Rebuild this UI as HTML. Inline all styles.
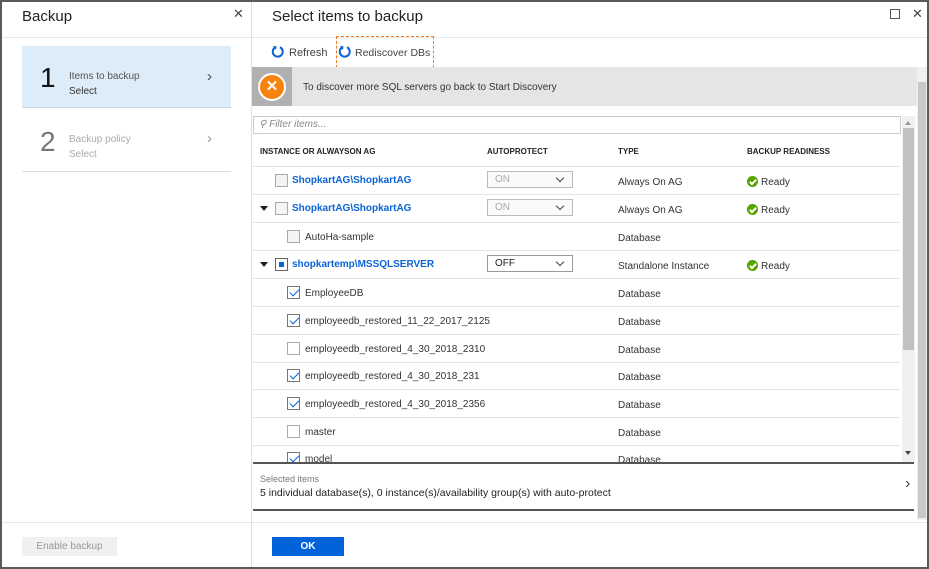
<!DOCTYPE html><html><head><style>
*{box-sizing:border-box;margin:0;padding:0}
body{width:929px;height:569px;position:relative;background:#fff;font-family:"Liberation Sans",sans-serif;font-size:11px;color:#333;overflow:hidden}
.a{position:absolute}
.cb{position:absolute;width:13px;height:13px;border:1px solid #aaa;background:#f4f4f4}
.ck{background:#fff;border-color:#777}
.ck::after{content:"";position:absolute;left:4px;top:0px;width:4px;height:8px;border:solid #0063d9;border-width:0 1.5px 1.5px 0;transform:rotate(45deg)}
.ln{position:absolute;left:253px;width:647px;height:1px;background:#e4e4e4}
.sel{position:absolute;left:487px;width:86px;height:17px;border:1px solid #999;padding:2px 7px;font-size:10px}
.sel.dis{color:#aaa;border-color:#bbb;background:#fafafa}
.sel::after{content:"";position:absolute;right:9px;top:3px;width:5px;height:5px;border:solid #444;border-width:0 1px 1px 0;transform:rotate(45deg)}
.ok{position:absolute;width:11px;height:11px;border-radius:50%;background:#57a300}
.ok::after{content:"";position:absolute;left:4px;top:2px;width:2px;height:5px;border:solid #fff;border-width:0 2px 2px 0;transform:rotate(45deg)}
.bl{color:#0a64d6;font-weight:bold}
.tri{position:absolute;width:0;height:0;border-left:4px solid transparent;border-right:4px solid transparent;border-top:5px solid #222}
.t{position:absolute;font-size:10px;top:0}
</style></head><body>
<div class="a" style="left:0;top:0;width:929px;height:569px;border:2px solid #5a5a5a;z-index:9;pointer-events:none"></div>
<!-- left pane -->
<div class="a" style="left:22px;top:8px;font-size:15px;color:#222">Backup</div>
<div class="a" style="left:233px;top:6px;font-size:13px;color:#444">✕</div>
<div class="a" style="left:2px;top:37px;width:249px;height:1px;background:#e6e6e6"></div>
<div class="a" style="left:251px;top:2px;width:1px;height:565px;background:#e0e0e0"></div>
<div class="a" style="left:22px;top:46px;width:209px;height:62px;background:#dcecf9;border-bottom:1px solid #c8d8e6"></div>
<div class="a" style="left:40px;top:62px;font-size:28px;color:#111">1</div>
<div class="a" style="left:69px;top:69px;color:#555;font-size:10px;line-height:15px">Items to backup<br><span style="color:#333">Select</span></div>
<div class="a" style="left:207px;top:68px;font-size:15px;color:#444">›</div>
<div class="a" style="left:40px;top:126px;font-size:28px;color:#777">2</div>
<div class="a" style="left:69px;top:132px;color:#aaa;font-size:10px;line-height:15px">Backup policy<br>Select</div>
<div class="a" style="left:207px;top:130px;font-size:15px;color:#999">›</div>
<div class="a" style="left:22px;top:171px;width:209px;height:1px;background:#ddd"></div>
<div class="a" style="left:2px;top:522px;width:249px;height:1px;background:#e6e6e6"></div>
<div class="a" style="left:22px;top:537px;width:95px;height:19px;background:#f0f0f0;color:#999;font-size:10px;text-align:center;line-height:19px">Enable backup</div>
<!-- right pane -->
<div class="a" style="left:272px;top:8px;font-size:15px;color:#222">Select items to backup</div>
<div class="a" style="left:890px;top:9px;width:10px;height:10px;border:1px solid #555"></div>
<div class="a" style="left:912px;top:6px;font-size:13px;color:#444">✕</div>
<div class="a" style="left:252px;top:37px;width:675px;height:1px;background:#e8e8e8"></div>
<svg class="a" style="left:271px;top:45px" width="13" height="13" viewBox="0 0 13 13"><path d="M4 2.5A5 5 0 1 0 9 2.2" fill="none" stroke="#0a64d6" stroke-width="2"/><path d="M2 1L5.5 1.3L5 5Z" fill="#0a64d6"/></svg>
<div class="a" style="left:289px;top:47px;color:#444">Refresh</div>
<div class="a" style="left:336px;top:36px;width:98px;height:32px;border:1.5px dashed #f07a22"></div>
<svg class="a" style="left:338px;top:45px" width="13" height="13" viewBox="0 0 13 13"><path d="M4 2.5A5 5 0 1 0 9 2.2" fill="none" stroke="#0a64d6" stroke-width="2"/><path d="M2 1L5.5 1.3L5 5Z" fill="#0a64d6"/></svg>
<div class="a" style="left:355px;top:47px;color:#444;font-size:10.5px">Rediscover DBs</div>
<div class="a" style="left:252px;top:67px;width:665px;height:39px;background:#e5e5e5"></div>
<div class="a" style="left:252px;top:67px;width:40px;height:39px;background:#b0b0b0"></div>
<div class="a" style="left:258px;top:73px;width:28px;height:28px;border-radius:50%;background:#f7830f;border:2px solid #fff;color:#fff;font-size:15px;text-align:center;line-height:23px;font-weight:bold">✕</div>
<div class="a" style="left:303px;top:82px;font-size:10px;color:#333">To discover more SQL servers go back to Start Discovery</div>
<div class="a" style="left:917px;top:67px;width:10px;height:453px;background:#f0f0f0"></div>
<div class="a" style="left:918px;top:82px;width:8px;height:436px;background:#c8c8c8"></div>
<div class="a" style="left:253px;top:116px;width:648px;height:18px;border:1px solid #ccc"></div>
<div class="a" style="left:259px;top:119px;font-size:10px;color:#888;font-style:italic">⚲ Filter items...</div>
<div class="a" style="left:902px;top:116px;width:13px;height:346px;background:#f0f0f0"></div>
<div class="a" style="left:903px;top:128px;width:11px;height:222px;background:#c1c1c1"></div>
<div class="a" style="left:905px;top:121px;border-left:3px solid transparent;border-right:3px solid transparent;border-bottom:4px solid #999;width:0"></div>
<div class="a" style="left:905px;top:451px;border-left:3px solid transparent;border-right:3px solid transparent;border-top:4px solid #444;width:0"></div>
<div class="a" style="left:260px;top:147px;font-size:8px;font-weight:bold;color:#222">INSTANCE OR ALWAYSON AG</div>
<div class="a" style="left:487px;top:147px;font-size:8px;font-weight:bold;color:#222">AUTOPROTECT</div>
<div class="a" style="left:618px;top:147px;font-size:8px;font-weight:bold;color:#222">TYPE</div>
<div class="a" style="left:747px;top:147px;font-size:8px;font-weight:bold;color:#222">BACKUP READINESS</div>
<div class="ln" style="top:166px"></div><div class="ln" style="top:194px"></div><div class="ln" style="top:222px"></div><div class="ln" style="top:250px"></div><div class="ln" style="top:278px"></div><div class="ln" style="top:306px"></div><div class="ln" style="top:334px"></div><div class="ln" style="top:362px"></div><div class="ln" style="top:389px"></div><div class="ln" style="top:417px"></div><div class="ln" style="top:445px"></div>
<!-- row1 -->
<div class="cb" style="left:275px;top:174px"></div><div class="a bl" style="left:292px;top:175px;font-size:10px">ShopkartAG\ShopkartAG</div>
<div class="sel dis" style="top:171px">ON</div><div class="a" style="left:618px;top:177px;font-size:10px">Always On AG</div>
<div class="ok" style="left:747px;top:176px"></div><div class="a" style="left:761px;top:177px;font-size:10px">Ready</div>
<!-- row2 -->
<div class="tri" style="left:260px;top:206px"></div>
<div class="cb" style="left:275px;top:202px"></div><div class="a bl" style="left:292px;top:203px;font-size:10px">ShopkartAG\ShopkartAG</div>
<div class="sel dis" style="top:199px">ON</div><div class="a" style="left:618px;top:205px;font-size:10px">Always On AG</div>
<div class="ok" style="left:747px;top:204px"></div><div class="a" style="left:761px;top:205px;font-size:10px">Ready</div>
<!-- row3 -->
<div class="cb" style="left:287px;top:230px"></div><div class="a" style="left:305px;top:232px;font-size:10px">AutoHa-sample</div>
<div class="a" style="left:618px;top:233px;font-size:10px">Database</div>
<!-- row4 -->
<div class="tri" style="left:260px;top:262px"></div>
<div class="cb" style="left:275px;top:258px;background:#fff;border-color:#666"><div style="position:absolute;left:3px;top:3px;width:5px;height:5px;background:#0a64d6"></div></div>
<div class="a bl" style="left:292px;top:259px;font-size:10px">shopkartemp\MSSQLSERVER</div>
<div class="sel" style="top:255px;color:#222">OFF</div><div class="a" style="left:618px;top:261px;font-size:10px">Standalone Instance</div>
<div class="ok" style="left:747px;top:260px"></div><div class="a" style="left:761px;top:261px;font-size:10px">Ready</div>
<!-- db rows -->
<div class="cb ck" style="left:287px;top:286px"></div><div class="a" style="left:305px;top:288px;font-size:10px">EmployeeDB</div><div class="a" style="left:618px;top:289px;font-size:10px">Database</div>
<div class="cb ck" style="left:287px;top:314px"></div><div class="a" style="left:305px;top:316px;font-size:10px">employeedb_restored_11_22_2017_2125</div><div class="a" style="left:618px;top:317px;font-size:10px">Database</div>
<div class="cb" style="left:287px;top:342px;background:#fff"></div><div class="a" style="left:305px;top:344px;font-size:10px">employeedb_restored_4_30_2018_2310</div><div class="a" style="left:618px;top:345px;font-size:10px">Database</div>
<div class="cb ck" style="left:287px;top:369px"></div><div class="a" style="left:305px;top:371px;font-size:10px">employeedb_restored_4_30_2018_231</div><div class="a" style="left:618px;top:372px;font-size:10px">Database</div>
<div class="cb ck" style="left:287px;top:397px"></div><div class="a" style="left:305px;top:399px;font-size:10px">employeedb_restored_4_30_2018_2356</div><div class="a" style="left:618px;top:400px;font-size:10px">Database</div>
<div class="cb" style="left:287px;top:425px;background:#fff"></div><div class="a" style="left:305px;top:427px;font-size:10px">master</div><div class="a" style="left:618px;top:428px;font-size:10px">Database</div>
<div class="a" style="left:253px;top:450px;width:648px;height:13px;overflow:hidden"><div class="cb ck" style="left:34px;top:2px"></div><div class="a" style="left:52px;top:4px;font-size:10px">model</div><div class="a" style="left:365px;top:5px;font-size:10px">Database</div></div>
<div class="a" style="left:253px;top:462px;width:661px;height:2px;background:#555"></div>
<div class="a" style="left:260px;top:474px;font-size:9px;color:#777">Selected items</div>
<div class="a" style="left:260px;top:487px;font-size:10.5px;color:#222">5 individual database(s), 0 instance(s)/availability group(s) with auto-protect</div>
<div class="a" style="left:905px;top:475px;font-size:16px;color:#444">›</div>
<div class="a" style="left:253px;top:509px;width:661px;height:2px;background:#555"></div>
<div class="a" style="left:252px;top:522px;width:675px;height:1px;background:#e8e8e8"></div>
<div class="a" style="left:272px;top:537px;width:72px;height:19px;background:#0063d9;color:#fff;font-size:10px;text-align:center;line-height:19px;font-weight:bold">OK</div>
</body></html>
